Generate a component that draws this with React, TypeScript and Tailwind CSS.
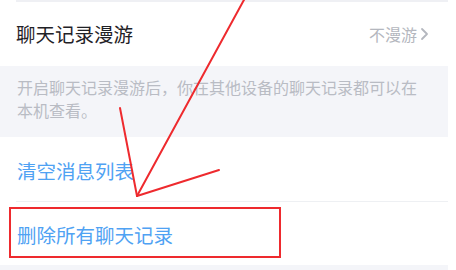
export default function App() {
  return (
    <div
      className="relative h-[270px] w-[456px] overflow-hidden bg-white"
      style={{ fontFamily: '"Noto Sans CJK SC", "Noto Sans", sans-serif' }}
    >
      <div className="flex h-full w-[448px] flex-col">
        <div className="ml-4 h-[2px] shrink-0 bg-[#eff0f4]" />

        <div className="flex h-[64px] shrink-0 items-center justify-between pl-4 pr-[18px]">
          <span className="text-[19.5px] leading-none text-[#1f2126]">聊天记录漫游</span>
          <span className="flex items-center gap-[3px] text-[16px] leading-none text-[#b4b7be]">
            不漫游
            <svg width="10" height="14" viewBox="0 0 10 14" fill="none">
              <path d="M2 2l5 5-5 5" stroke="#b4b7be" strokeWidth="1.8" strokeLinecap="round" strokeLinejoin="round" />
            </svg>
          </span>
        </div>

        <div className="h-[71px] shrink-0 bg-[#f4f5f9] pl-[17px] pr-4 pt-[10px] text-[16px] leading-[23px] text-[#b9bcc4]">
          开启聊天记录漫游后，你在其他设备的聊天记录都可以在本机查看。
        </div>

        <div className="flex h-[64px] shrink-0 items-center pl-[17px] pt-[3px]">
          <span className="text-[19.5px] leading-none text-[#4fa2f3]">清空消息列表</span>
        </div>

        <div className="ml-4 h-px shrink-0 bg-[#eef0f3]" />

        <div className="flex h-[63px] shrink-0 items-center pl-[17px] pt-[3px]">
          <span className="text-[19.5px] leading-none text-[#4fa2f3]">删除所有聊天记录</span>
        </div>

        <div className="flex-1 bg-[#f4f5f9]" />
      </div>

      <div className="absolute left-[9px] top-[207px] h-[51px] w-[272px] border-2 border-[#ee2a2e]" />

      <svg className="absolute inset-0" width="456" height="270" viewBox="0 0 456 270" fill="none">
        <g stroke="#ee2a2e" strokeWidth="2" strokeLinecap="round">
          <line x1="245" y1="-2" x2="137" y2="196" />
          <line x1="120" y1="108" x2="137" y2="196" />
          <line x1="137" y1="196" x2="219" y2="170" />
        </g>
      </svg>
    </div>
  );
}
